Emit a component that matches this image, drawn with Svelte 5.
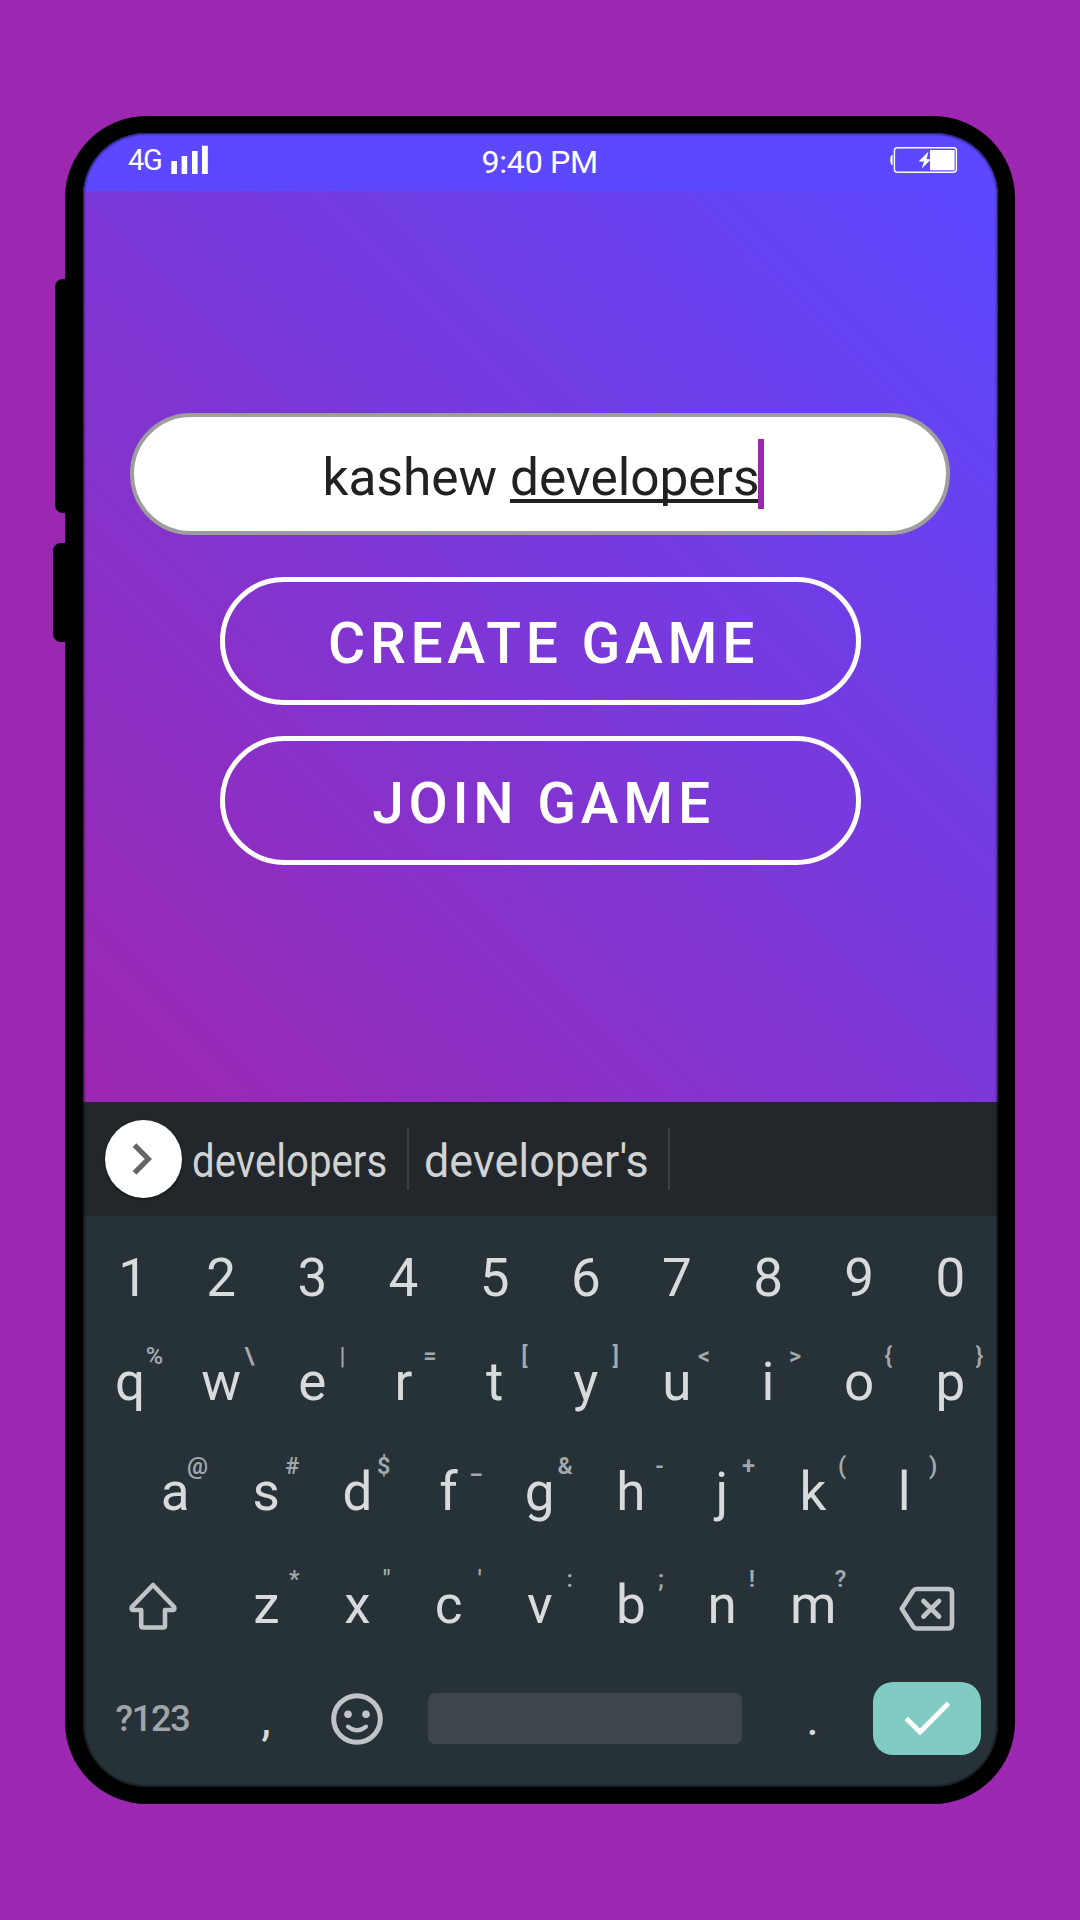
<script>
  const digits = '1234567890'.split('');
  const top = [['q', '%'], ['w', '\\'], ['e', '|'], ['r', '='], ['t', '['], ['y', ']'], ['u', '<'], ['i', '>'], ['o', '{'], ['p', '}']];
  const home = [['a', '@'], ['s', '#'], ['d', '$'], ['f', '_'], ['g', '&'], ['h', '-'], ['j', '+'], ['k', '('], ['l', ')']];
  const bottom = [['z', '*'], ['x', '"'], ['c', "'"], ['v', ':'], ['b', ';'], ['n', '!'], ['m', '?']];
</script>

{#snippet keys(list)}
  {#each list as [letter, hint]}
    <div class="key">{letter}<span class="hint">{hint}</span></div>
  {/each}
{/snippet}

<div class="stage">
  <div class="phone">
    <div class="side volume"></div>
    <div class="side power"></div>
    <div class="screen">
      <header class="status">
        <div class="network">
          <span>4G</span>
          <svg width="38" height="30" viewBox="0 0 38 30" fill="#fff">
            <rect x="0.3" y="16" width="5.6" height="13" />
            <rect x="10.6" y="11" width="5.6" height="18" />
            <rect x="21" y="6" width="5.6" height="23" />
            <rect x="31" y="0.7" width="5.8" height="28.3" />
          </svg>
        </div>
        <div class="clock">9:40 PM</div>
        <div class="battery">
          <svg width="68" height="28" viewBox="0 0 68 28">
            <path d="M2.6 8.8 Q0.3 9 0.3 14 Q0.3 19 2.6 19.2 Z" fill="#fff" />
            <rect x="4.4" y="1.7" width="62" height="24.6" rx="3" fill="none" stroke="#fff" stroke-width="1.4" />
            <rect x="40" y="4" width="24.6" height="20.3" fill="#fff" />
            <path d="M38.5 5.5 L28.6 15.4 H34 L31.8 22.5 L41 13.2 H36.5 Z" fill="#fff" />
          </svg>
        </div>
      </header>

      <main class="game">
        <div class="name"><span>kashew&nbsp;</span><span class="composing">developers</span><i class="caret"></i></div>
        <button class="action">CREATE GAME</button>
        <button class="action">JOIN GAME</button>
      </main>

      <div class="suggestions">
        <div class="more">
          <svg width="24" height="34" viewBox="0 0 24 34"><path d="M3.5 3.2 L17.3 17 L3.5 30.8" fill="none" stroke="#666" stroke-width="5.2" /></svg>
        </div>
        <div class="word first"><span>developers</span></div>
        <div class="word second"><span>developer's</span></div>
      </div>

      <div class="keyboard">
        <div class="row r1">{#each digits as d}<div class="key" class:one={d === '1'}>{d}</div>{/each}</div>
        <div class="row r2">{@render keys(top)}</div>
        <div class="row r3">{@render keys(home)}</div>
        <div class="row r4">
          <div class="wide shift">
            <svg width="52" height="50" viewBox="0 0 52 50"><path d="M26 4 L47.2 26 Q48 29 45.5 29 H38 V44.5 Q38 46.5 36 46.5 H16.2 Q14.2 46.5 14.2 44.5 V29 H6.5 Q4 29 4.8 26 Z" fill="none" stroke="#c1c4c6" stroke-width="4.6" stroke-linejoin="round" /></svg>
          </div>
          {@render keys(bottom)}
          <div class="wide erase">
            <svg width="58" height="48" viewBox="0 0 58 48" fill="none" stroke="#c1c4c6" stroke-width="4.6" stroke-linejoin="round" stroke-linecap="round">
              <path d="M18.5 4 H50 Q54 4 54 8 V39.5 Q54 43.5 50 43.5 H18.5 Q16.5 43.5 15.3 41.7 L3.8 23.8 L15.3 5.8 Q16.5 4 18.5 4 Z" />
              <path d="M25.5 16 L41 31.5 M41 16 L25.5 31.5" stroke-width="4.8" />
            </svg>
          </div>
        </div>
        <div class="row r5">
          <div class="symbols">?123</div>
          <div class="mark">,</div>
          <div class="emoji">
            <svg width="54" height="54" viewBox="0 0 54 54" fill="none" stroke="#c1c4c6">
              <circle cx="27" cy="27" r="23.3" stroke-width="5" />
              <circle cx="18" cy="22.3" r="3.8" fill="#c1c4c6" stroke="none" />
              <circle cx="36" cy="22.3" r="3.8" fill="#c1c4c6" stroke="none" />
              <path d="M18 34.6 Q27 42 36 34.6" stroke-width="4.2" stroke-linecap="round" />
            </svg>
          </div>
          <div class="space"></div>
          <div class="mark dot">.</div>
          <div class="enter">
            <svg width="48" height="38" viewBox="0 0 48 38"><path d="M3.3 18.5 L17 32 L45.5 3.3" fill="none" stroke="#fff" stroke-width="5" /></svg>
          </div>
        </div>
      </div>
    </div>
  </div>
</div>

<style>
  :global(body) { background: #9c27b0; }
  .stage {
    width: 1080px; height: 1920px; box-sizing: border-box; padding: 115.5px 65px;
    background: #9c27b0; font-family: Roboto, sans-serif; overflow: hidden;
  }
  .phone {
    position: relative; box-sizing: border-box; width: 950px; height: 1688.5px;
    padding: 17.5px 17.5px 17px; border-radius: 82px; background: #000;
  }
  .side { position: absolute; background: #000; border-radius: 8px; width: 24px; }
  .volume { left: -10px; top: 163.5px; height: 233.5px; }
  .power { left: -12px; top: 427px; height: 99px; }
  .screen {
    position: relative; height: 100%; display: flex; flex-direction: column;
    border-radius: 63px; overflow: hidden; background: #263238;
  }
  .screen::after {
    content: ''; position: absolute; inset: 0; border-radius: 63px;
    box-shadow: inset 0 0 3px 0.5px #000; pointer-events: none;
  }
  .status {
    flex: none; height: 58px; display: grid; grid-template-columns: 1fr auto 1fr;
    box-sizing: border-box; padding: 0 40px 0 45.5px; color: #fff; background: #5c48ff;
  }
  .network { display: flex; font-size: 29px; line-height: 54px; letter-spacing: -1.2px; }
  .network span { width: 43px; }
  .network svg { margin-top: 12px; }
  .clock { font-size: 32.2px; line-height: 58px; margin-left: -6px; letter-spacing: -0.3px; }
  .battery { text-align: right; }
  .battery svg { margin-top: 12.5px; }
  .game {
    flex: none; height: 911px; box-sizing: border-box; padding-top: 222px;
    display: flex; flex-direction: column; align-items: center;
    background: linear-gradient(45deg, #9c27b0 1%, #5c48ff 99%);
  }
  .name {
    position: relative; box-sizing: border-box; width: 820px; height: 122px; border: 4px solid #9e9e9e;
    border-radius: 61px; background: #fff; color: #212121; display: flex; justify-content: center;
    font-size: 51.4px; line-height: 122px; margin-bottom: 41.5px; padding-left: 2px;
  }
  .composing {
    text-decoration: underline; text-decoration-thickness: 4px; text-decoration-skip-ink: none;
    text-underline-offset: 3.5px;
  }
  .caret { width: 5.5px; height: 70px; margin: 22px -4px 0 -1.5px; background: #9c27b0; }
  .action {
    box-sizing: border-box; width: 641px; height: 128.5px; border: 5px solid #fff; border-radius: 65px;
    background: none; color: #fff; font: 500 57px/118px Roboto, sans-serif; letter-spacing: 4.7px;
    padding: 7px 0 0 6px; margin: 0 0 31px 1px; display: flex; justify-content: center; align-items: center;
  }
  .suggestions { flex: none; height: 114px; display: flex; align-items: center; background: #22272b; color: #d0d2d3; }
  .more {
    width: 77px; height: 78px; margin-left: 22px; border-radius: 50%; background: #fff;
    display: flex; align-items: center; justify-content: center; box-shadow: 0 1px 3px #0008;
  }
  .word { height: 62px; box-sizing: border-box; border-right: 2.5px solid #3a4145; font-size: 46.5px; line-height: 67px; white-space: nowrap; }
  .word span { display: inline-block; transform-origin: left; }
  .first { width: 227px; padding-left: 10px; }
  .first span { transform: scaleX(0.864); }
  .second { width: 261px; padding-left: 15.5px; }
  .second span { transform: scaleX(0.967); }
  .keyboard { flex: 1; padding: 10.5px 0 0 2px; color: #d8dadb; font-size: 53px; }
  .row { display: flex; }
  .key { position: relative; width: 91.15px; text-align: center; }
  .one { text-indent: 6px; }
  .hint { position: absolute; right: 12.5px; top: 0; font-size: 23.5px; font-weight: 600; color: #a3a8ab; transform: translateY(-26px); }
  .r1 { line-height: 103px; }
  .r2 { line-height: 104px; }
  .r3 { line-height: 117px; padding-left: 45px; }
  .r4 { line-height: 108px; }
  .r5 { line-height: 122px; height: 120px; align-items: center; }
  .wide { width: 136.3px; display: flex; align-items: center; justify-content: center; }
  .shift svg { margin: 3px 0 0 0; }
  .erase svg { margin: 8px 0 0 0; }
  .symbols { width: 136px; text-align: center; font-size: 36px; font-weight: 500; letter-spacing: -1.2px; color: #9fa5a8; }
  .mark { width: 91px; text-align: center; font-size: 48px; }
  .emoji { width: 90px; display: flex; justify-content: center; }
  .space { width: 314px; height: 50.5px; margin-left: 26.5px; border-radius: 7px; background: #3c464b; }
  .dot { margin-left: 25px; }
  .enter {
    width: 108px; height: 73px; margin-left: 15px; border-radius: 20px; background: #80cbc4;
    display: flex; align-items: center; justify-content: center;
  }
</style>
